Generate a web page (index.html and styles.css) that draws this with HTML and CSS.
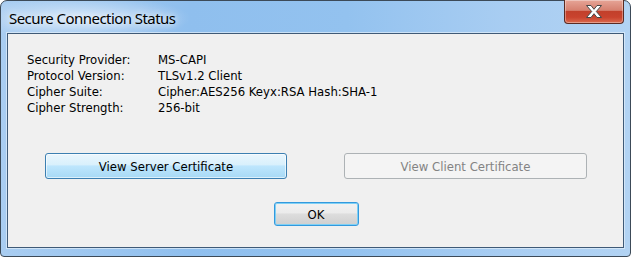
FILE: index.html
```html
<!DOCTYPE html>
<html>
<head>
<meta charset="utf-8">
<link rel="stylesheet" href="styles.css">
</head>
<body>
<div class="window">
  <div class="titlebar">
    <span class="title">Secure Connection Status</span>
    <div class="close">
      <svg width="18" height="15" viewBox="0 0 18 15">
        <path d="M1.5 1.5h4.5l3 3.8 3-3.8h4.5l-5.2 6 5.2 6h-4.5l-3-3.8-3 3.8h-4.5l5.2-6z" fill="#fff" stroke="#474747" stroke-width="1" stroke-linejoin="round"/>
      </svg>
    </div>
  </div>
  <div class="client">
    <div class="info">
      <span>Security Provider:</span><span>MS-CAPI</span>
      <span>Protocol Version:</span><span>TLSv1.2 Client</span>
      <span>Cipher Suite:</span><span>Cipher:AES256 Keyx:RSA Hash:SHA-1</span>
      <span>Cipher Strength:</span><span>256-bit</span>
    </div>
    <div class="cert-row">
      <button class="btn btn-hot">View Server Certificate</button>
      <button class="btn btn-disabled">View Client Certificate</button>
    </div>
    <div class="ok-row">
      <button class="btn btn-ok">OK</button>
    </div>
  </div>
</div>
</body>
</html>
```

FILE: styles.css
```css
html, body {
  margin: 0;
  padding: 0;
  background: #fff;
}
.window {
  width: 631px;
  height: 257px;
  box-sizing: border-box;
  border: 1px solid #3c4a58;
  border-radius: 7px 7px 4px 4px;
  background:
    radial-gradient(ellipse 110px 22px at 80px 17px, rgba(255,255,255,0.55), rgba(255,255,255,0) 100%),
    linear-gradient(90deg, #a9cdf1 0%, #8fbfee 30%, #93c2ef 55%, #a8cdf2 80%, #b2d3f3 100%);
  display: flex;
  flex-direction: column;
  padding: 0 6px 8px 6px;
  font-family: "DejaVu Sans Condensed", "DejaVu Sans", Tahoma, sans-serif;
}
.titlebar {
  height: 32px;
  display: flex;
  justify-content: space-between;
  align-items: flex-start;
}
.title {
  font-family: "Noto Sans", "Open Sans", sans-serif;
  font-size: 15px;
  letter-spacing: -0.55px;
  color: #000;
  margin: 8px 0 0 2px;
  line-height: 18px;
  text-shadow: 0 0 6px rgba(255,255,255,0.9), 0 0 12px rgba(255,255,255,0.8);
}
.close {
  width: 58px;
  height: 23px;
  margin-top: -1px;
  border: 1px solid #5a2a22;
  border-top: none;
  border-radius: 0 0 4px 4px;
  background: linear-gradient(180deg, #e6a597 0%, #d6806f 45%, #c2402b 50%, #c9432e 75%, #da6a4e 100%);
  box-shadow: inset 0 0 0 1px rgba(255,255,255,0.35);
  display: flex;
  align-items: center;
  justify-content: center;
}
.client {
  flex: 1;
  background: #f0f0f0;
  border: 1px solid #3f5a77;
  box-shadow: 0 0 0 1px rgba(225,238,250,0.7);
  padding: 18px 36px 0 37px;
  display: flex;
  flex-direction: column;
  font-size: 13px;
}
.info {
  display: grid;
  grid-template-columns: 131px auto;
  line-height: 16px;
  margin-left: -18px;
  color: #000;
}
.cert-row {
  display: flex;
  justify-content: space-between;
  margin-top: 37px;
}
.btn {
  font-family: "DejaVu Sans Condensed", "DejaVu Sans", Tahoma, sans-serif;
  font-size: 13px;
  box-sizing: border-box;
  border-radius: 3px;
  padding: 0;
  margin: 0;
}
.btn-hot {
  width: 242px;
  height: 26px;
  border: 1px solid #3c7fb1;
  background: linear-gradient(180deg, #eaf6fd 0%, #d9f0fc 45%, #bee6fd 50%, #a7d9f5 100%);
  box-shadow: inset 0 0 0 1px rgba(255,255,255,0.6);
  color: #000;
}
.btn-disabled {
  width: 243px;
  height: 26px;
  border: 1px solid #adb2b5;
  background: #f4f4f4;
  color: #838383;
}
.ok-row {
  display: flex;
  justify-content: center;
  margin-top: 23px;
}
.btn-ok {
  width: 85px;
  height: 24px;
  border: 1px solid #3399dd;
  background: linear-gradient(180deg, #f2f2f2 0%, #ebebeb 45%, #dddddd 50%, #cfcfcf 100%);
  box-shadow: inset 0 0 0 1px #7fd0f5;
  color: #000;
}
```
